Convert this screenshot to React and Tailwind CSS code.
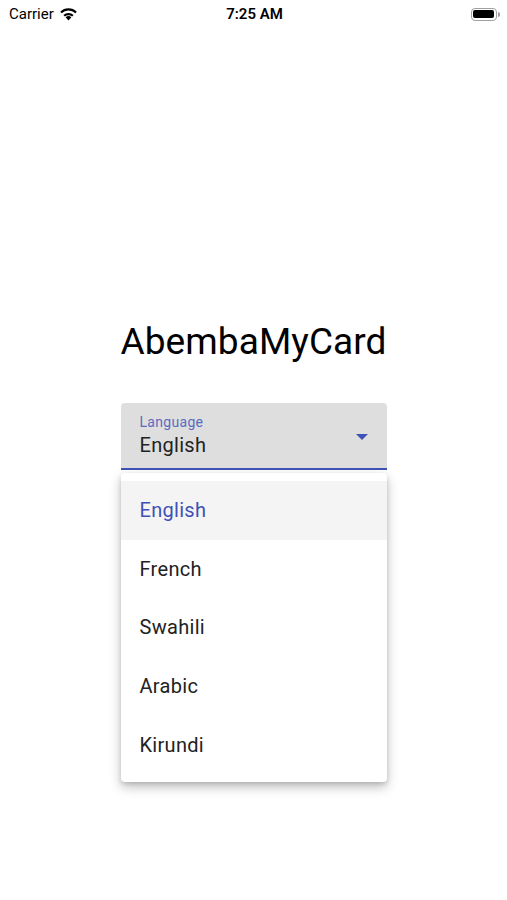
import React, { useState } from 'react';

const languages = ['English', 'French', 'Swahili', 'Arabic', 'Kirundi'];

const StatusBar = () => (
  <div className="flex items-center justify-between h-[28px] pl-[9px] pr-[7px] text-[15px] text-black">
    <div className="flex items-center gap-[5px] w-[120px]">
      <span>Carrier</span>
      <svg width="19" height="14" viewBox="0 0 19 14">
        <path d="M9.5 13.5 L6.6 10.3 A4.2 4.2 0 0 1 12.4 10.3 Z" fill="#000" />
        <path d="M4.4 8 A7.4 7.4 0 0 1 14.6 8 L13.1 9.6 A5.3 5.3 0 0 0 5.9 9.6 Z" fill="#000" />
        <path d="M1.2 4.7 A11.8 11.8 0 0 1 17.8 4.7 L16.3 6.3 A9.6 9.6 0 0 0 2.7 6.3 Z" fill="#000" />
      </svg>
    </div>
    <span className="font-semibold text-[15px]">7:25 AM</span>
    <div className="flex justify-end w-[120px]">
      <div className="flex items-center">
        <div className="w-[26px] h-[13px] rounded-[4px] border border-[#a0a0a0] p-[1.5px]">
          <div className="w-full h-full rounded-[2px] bg-black" />
        </div>
        <div className="w-[2px] h-[5px] rounded-r-sm bg-[#a0a0a0] ml-[1px]" />
      </div>
    </div>
  </div>
);

export default function App() {
  const [selected, setSelected] = useState('English');

  return (
    <div className="w-[507px] h-[900px] bg-white font-['Roboto',sans-serif] overflow-hidden">
      <StatusBar />
      <div className="flex flex-col items-center pt-[290px]">
        <h1 className="text-[37px] leading-[48px] text-black tracking-[0.1px]">AbembaMyCard</h1>
        <div className="w-[266px] mt-[37px]">
          <div className="relative h-[67px] bg-[#dedede] rounded-t-[4px] border-b-2 border-[#3f51b5] px-[19px] pt-[10px]">
            <div className="text-[14px] leading-[18px] text-[#5c6bc0] tracking-[0.3px]">Language</div>
            <div className="text-[20px] leading-[28px] text-[#222] tracking-[0.3px]">{selected}</div>
            <svg className="absolute right-[19px] top-[31px]" width="12" height="6" viewBox="0 0 12 6">
              <path d="M0 0 L12 0 L6 6 Z" fill="#3f51b5" />
            </svg>
          </div>
          <ul className="mt-[3px] py-[8px] bg-white rounded-[4px] shadow-[0_5px_12px_rgba(0,0,0,0.25),0_2px_4px_rgba(0,0,0,0.12)]">
            {languages.map((lang) => (
              <li
                key={lang}
                onClick={() => setSelected(lang)}
                className={
                  lang === selected
                    ? 'h-[58.6px] flex items-center px-[19px] text-[20px] tracking-[0.3px] bg-[#f4f4f4] text-[#3f51b5]'
                    : 'h-[58.6px] flex items-center px-[19px] text-[20px] tracking-[0.3px] text-[#222]'
                }
              >
                {lang}
              </li>
            ))}
          </ul>
        </div>
      </div>
    </div>
  );
}
